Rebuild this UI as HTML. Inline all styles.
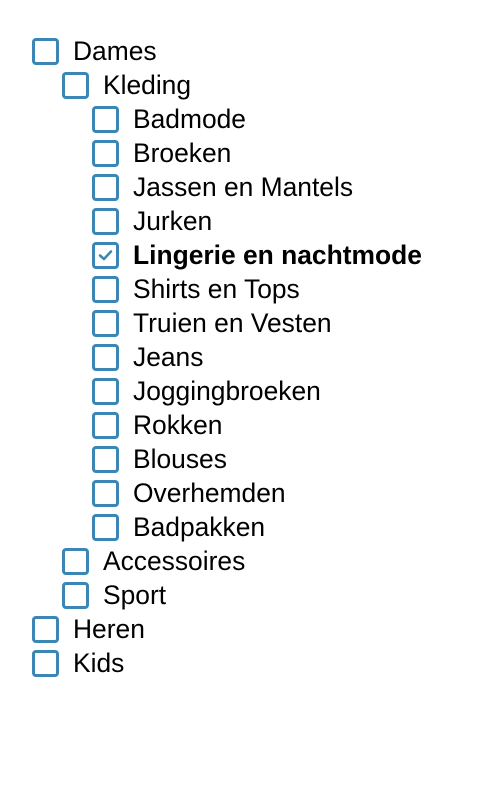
<!DOCTYPE html>
<html><head><style>
body{margin:0;background:#fff;font-family:"Liberation Sans",Arial,sans-serif;}
.r{position:absolute;height:34px;display:flex;align-items:center;font-size:26.4px;color:#000;}
.b{width:21px;height:21px;border:3px solid #3b86b4;border-radius:4px;margin-right:14px;flex:none;position:relative;}
.b svg{position:absolute;left:2px;top:2px}
</style></head><body>
<div class="r" style="left:32px;top:34px"><span class="b"></span>Dames</div>
<div class="r" style="left:62px;top:68px"><span class="b"></span>Kleding</div>
<div class="r" style="left:92px;top:102px"><span class="b"></span>Badmode</div>
<div class="r" style="left:92px;top:136px"><span class="b"></span>Broeken</div>
<div class="r" style="left:92px;top:170px"><span class="b"></span>Jassen en Mantels</div>
<div class="r" style="left:92px;top:204px"><span class="b"></span>Jurken</div>
<div class="r" style="left:92px;top:238px;font-weight:bold"><span class="b"><svg width="17" height="17" viewBox="0 0 17 17"><path d="M3 8.5 L7 12 L14 4.5" fill="none" stroke="#3b86b4" stroke-width="2.5" stroke-linecap="round" stroke-linejoin="round"/></svg></span>Lingerie en nachtmode</div>
<div class="r" style="left:92px;top:272px"><span class="b"></span>Shirts en Tops</div>
<div class="r" style="left:92px;top:306px"><span class="b"></span>Truien en Vesten</div>
<div class="r" style="left:92px;top:340px"><span class="b"></span>Jeans</div>
<div class="r" style="left:92px;top:374px"><span class="b"></span>Joggingbroeken</div>
<div class="r" style="left:92px;top:408px"><span class="b"></span>Rokken</div>
<div class="r" style="left:92px;top:442px"><span class="b"></span>Blouses</div>
<div class="r" style="left:92px;top:476px"><span class="b"></span>Overhemden</div>
<div class="r" style="left:92px;top:510px"><span class="b"></span>Badpakken</div>
<div class="r" style="left:62px;top:544px"><span class="b"></span>Accessoires</div>
<div class="r" style="left:62px;top:578px"><span class="b"></span>Sport</div>
<div class="r" style="left:32px;top:612px"><span class="b"></span>Heren</div>
<div class="r" style="left:32px;top:646px"><span class="b"></span>Kids</div>
</body></html>
